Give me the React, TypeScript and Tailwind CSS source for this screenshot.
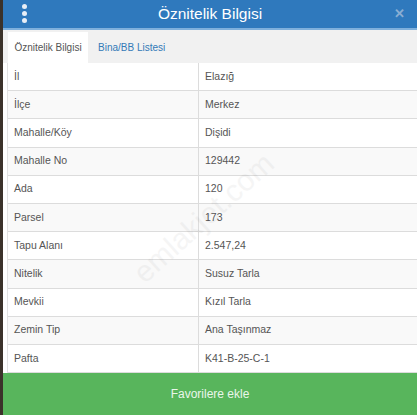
import React from "react";

const rows: [string, string][] = [
  ["İl", "Elazığ"],
  ["İlçe", "Merkez"],
  ["Mahalle/Köy", "Dişidi"],
  ["Mahalle No", "129442"],
  ["Ada", "120"],
  ["Parsel", "173"],
  ["Tapu Alanı", "2.547,24"],
  ["Nitelik", "Susuz Tarla"],
  ["Mevkii", "Kızıl Tarla"],
  ["Zemin Tip", "Ana Taşınmaz"],
  ["Pafta", "K41-B-25-C-1"],
];

export default function App() {
  return (
    <div className="w-[417px] h-[415px] flex bg-[#3a3128] overflow-hidden relative font-['Liberation_Sans',Arial,sans-serif]">
      <div className="w-[3px] shrink-0 bg-[#3b322a]" />
      <div className="flex-1 flex flex-col bg-white">
        <div className="h-[28px] bg-[#2f79bd] flex items-center relative shrink-0">
          <div className="absolute left-[19px] top-[4px] flex flex-col gap-[2px]">
            <div className="w-[5px] h-[5px] rounded-full bg-[#e8eef6]" />
            <div className="w-[5px] h-[5px] rounded-full bg-[#e8eef6]" />
            <div className="w-[5px] h-[5px] rounded-full bg-[#e8eef6]" />
          </div>
          <div className="flex-1 text-center text-white text-[15.5px] leading-none">
            Öznitelik Bilgisi
          </div>
          <div className="absolute right-[12px] top-[7px] text-[#8aaed3] text-[13px] font-bold leading-none">
            ✕
          </div>
        </div>
        <div className="h-[2px] bg-[#7fb0dc] shrink-0" />
        <div className="h-[33px] bg-[#f1f1f1] flex items-end px-[5px] shrink-0">
          <div className="h-[31px] w-[80px] bg-white flex items-center justify-center text-[10px] text-[#555]">
            Öznitelik Bilgisi
          </div>
          <div className="h-[31px] px-[10px] flex items-center text-[10px] text-[#337ab7]">
            Bina/BB Listesi
          </div>
        </div>
        <div className="flex-1 pl-[4px] bg-white">
          <div className="border-l border-[#e2e2e2] h-full">
            {rows.map(([k, v], i) => (
              <div
                key={k}
                className={`h-[28.2px] flex text-[10.5px] text-[#555] border-b border-[#dcdcdc] ${
                  i % 2 === 1 ? "bg-[#f9f9f9]" : "bg-white"
                }`}
              >
                <div className="w-[191px] shrink-0 border-r border-[#dcdcdc] flex items-center pl-[6px]">
                  {k}
                </div>
                <div className="flex-1 flex items-center pl-[6px]">{v}</div>
              </div>
            ))}
          </div>
        </div>
        <div className="h-[42px] bg-[#58b55c] flex items-center justify-center text-[#eaf6ea] text-[12px] shrink-0">
          Favorilere ekle
        </div>
      </div>
      <div className="absolute left-[115px] top-[195px] -rotate-[42deg] text-[30px] text-[#000] opacity-[0.035] pointer-events-none whitespace-nowrap">
        emlakjet.com
      </div>
    </div>
  );
}
